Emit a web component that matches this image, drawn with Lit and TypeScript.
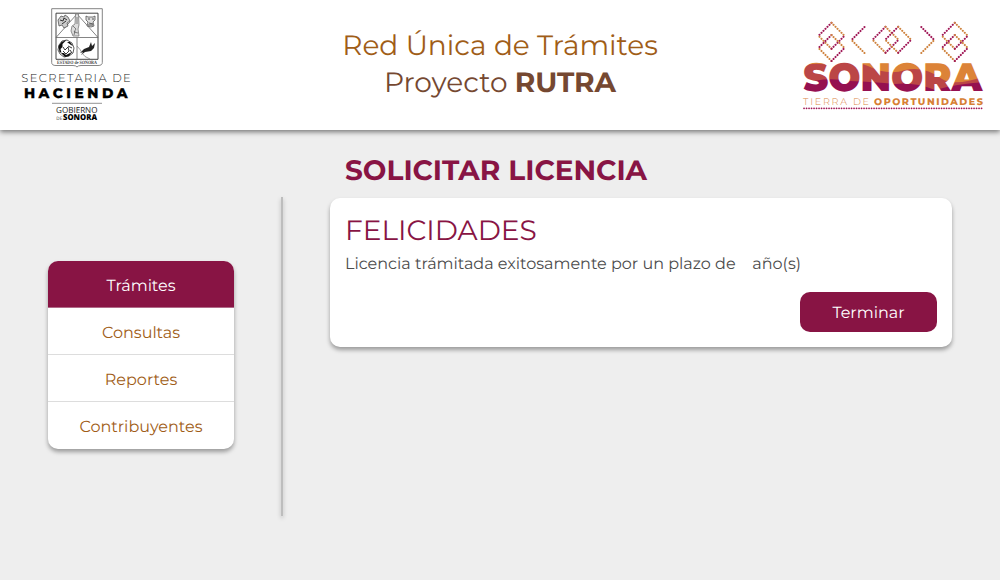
import { LitElement, html, css, svg } from "lit";
import { customElement, property } from "lit/decorators.js";

const MAGENTA = "#a01857";
const ORANGE = "#cf8440";

/** Dotted diamond centred on x, y. */
const diamond = (x: number, y: number) => svg`
  <path d="M${x} ${y - 13}l-13 13" stroke=${MAGENTA} />
  <path d="M${x} ${y - 13}l13 13" stroke=${ORANGE} />
  <path d="M${x} ${y + 13}l-13 -13" stroke=${ORANGE} />
  <path d="M${x} ${y + 13}l13 -13" stroke=${MAGENTA} />`;

@customElement("hacienda-logo")
class HaciendaLogo extends LitElement {
  static styles = css`
    :host { display: block; width: 112px; height: 116px; }
    svg { display: block; overflow: visible; }
    .sans { font-family: Montserrat, Inter, sans-serif; }
    .narrow { font-family: "Open Sans", "Noto Sans", sans-serif; }
    .serif { font-family: "Liberation Serif", serif; }
  `;
  render() {
    return html`<svg width="112" height="116" viewBox="20 6 112 116">
      <path d="M51.7 8.7H102.3V62.5Q102.3 65.5 98 65.5H81Q78 65.5 77 67Q76 65.5 73 65.5H56Q51.7 65.5 51.7 62.5Z" fill="#fff" stroke="#777" stroke-width=".9" />
      <path d="M56 13.2H98V59.3H56Z" fill="none" stroke="#444" stroke-width="1" />
      <path d="M56 37.5H98M77 37.5V59M77 14L56 37.5M77 14L98 37.5" fill="none" stroke="#666" stroke-width=".8" />
      <path d="M58 20l3-4 3 1 1-2 3 2 2 4-3 2 1 3-4 2-2-3-3 1z" fill="#ccc" stroke="#444" stroke-width=".7" />
      <path d="M60 20l3 1 1-3 3 2M62 24l4-3" fill="none" stroke="#222" stroke-width=".9" />
      <path d="M86 16l2 1h5l2-1v4l-2 2 1 4-3 1-4-1 1-4-2-2z" fill="#ddd" stroke="#555" stroke-width=".8" />
      <path d="M88 19h2M92 19h2M89 23l4 1M88 25h5" stroke="#333" stroke-width=".8" />
      <path d="M75.5 14h3l.5 11-1 4 1 7h-6l-2-5 1-5 3-2z" fill="#ddd" stroke="#777" stroke-width=".8" />
      <path d="M73 26l3 3-2 3 4 1M74 35l1-4M77 17v7" fill="none" stroke="#555" stroke-width=".7" />
      <path d="M59 45l3-4 5-1 5 3 2 5-1 5-4 3-5 1-4-3-2-4z" fill="#fff" stroke="#333" stroke-width=".8" />
      <path d="M58.5 46l3-4 5-2-4 4 0 3-2 2 1 4-2-1zM61 53l3 0 2 2 6-3-3 4-4 1zM67 42l3 0 3 4-2-1z" fill="#111" />
      <path d="M63 47l2 3 3-3 1 4-3 3-3-3M68 46l4 2M70 50l2 3" fill="none" stroke="#222" stroke-width=".9" />
      <path d="M80 53l4-4 5-2 2-5 1 4 3-3-1 5-3 3-6 1-4 3 2-3z" fill="#222" />
      <path d="M77 46Q81 50 82 53Q84 57 90 59" fill="none" stroke="#777" stroke-width=".7" />
      <text class="serif" x="57" y="63.9" font-size="5" font-weight="700" fill="#444" textLength="40" lengthAdjust="spacingAndGlyphs">ESTADO de SONORA</text>
      <text class="sans" x="21.3" y="82" font-size="11.5" font-weight="300" fill="#222" textLength="109.5">SECRETARIA DE</text>
      <text class="sans" x="24" y="98" font-size="13.8" font-weight="800" fill="#000" stroke="#000" stroke-width=".25" textLength="103.5">HACIENDA</text>
      <path d="M52 103.3H102" stroke="#777" stroke-width=".8" />
      <text class="narrow" x="56" y="112.8" font-size="8.4" fill="#222" textLength="41.5" lengthAdjust="spacingAndGlyphs">GOBIERNO</text>
      <text class="narrow" x="56.3" y="119.7" font-size="4.5" fill="#333" textLength="6" lengthAdjust="spacingAndGlyphs">DE</text>
      <text class="narrow" x="63" y="119.7" font-size="8.2" font-weight="800" fill="#000" textLength="34" lengthAdjust="spacingAndGlyphs">SONORA</text>
    </svg>`;
  }
}

@customElement("sonora-logo")
class SonoraLogo extends LitElement {
  static styles = css`
    :host { display: block; width: 184px; height: 92px; }
    svg { display: block; overflow: visible; }
    text { font-family: Montserrat, Inter, sans-serif; }
  `;
  render() {
    return html`<svg width="184" height="92" viewBox="801 20 184 92">
      <defs>
        <pattern id="bands" patternUnits="userSpaceOnUse" x="801" y="60" width="184" height="35" viewBox="801 60 184 35">
          <path d="M801 60H985V95H801Z" fill="#dc8338" />
          <path d="M801 66Q815 62 828 65Q850 59 868 66Q888 76 905 70Q925 66 942 79Q955 87 985 76V95H801Z" fill="#bb4646" />
          <path d="M801 85Q823 76 850 81Q875 82 895 84Q915 82 935 90Q955 84 985 82V95H801Z" fill="#951050" />
        </pattern>
      </defs>
      <g fill="none" stroke-width="2.1" stroke-linecap="round" stroke-dasharray="0.1 2.72">
        ${diamond(831.5, 35.8)} ${diamond(831.5, 48)}
        ${diamond(885.5, 39.8)} ${diamond(898.2, 39.8)}
        ${diamond(954.8, 35.8)} ${diamond(954.8, 48)}
        <path d="M864.5 27l-13 13" stroke=${MAGENTA} /><path d="M864.5 53l-13 -13" stroke=${ORANGE} />
        <path d="M921.3 27l13 13" stroke=${MAGENTA} /><path d="M921.3 53l13 -13" stroke=${ORANGE} />
      </g>
      <text x="803.2" y="91.3" font-size="39.5" font-weight="900" fill="url(#bands)" textLength="179" lengthAdjust="spacingAndGlyphs">SONORA</text>
      <text x="803" y="105" font-size="9.6" font-weight="300" fill="#d9843f" textLength="66">TIERRA DE</text>
      <text x="874" y="105" font-size="9.6" font-weight="800" fill="#d77f35" textLength="109">OPORTUNIDADES</text>
      <path d="M804 108.3H983" stroke=${MAGENTA} stroke-width="1.7" stroke-linecap="round" stroke-dasharray="0.1 2.4" />
    </svg>`;
  }
}

@customElement("app-root")
class AppRoot extends LitElement {
  @property({ type: Array }) sections = ["Trámites", "Consultas", "Reportes", "Contribuyentes"];

  static styles = css`
    :host {
      display: flex; flex-direction: column; height: 580px; overflow: hidden;
      background: #eee; color: #4c4c4c; font: 400 16px/24px Montserrat, Inter, sans-serif;
      text-rendering: geometricPrecision;
    }
    * { box-sizing: border-box; }
    header {
      flex: none; display: grid; grid-template-columns: 310px 340px 1fr; justify-items: start; height: 130px; padding: 6px 15px 0 20px;
      background: #fff; box-shadow: 0 2px 5px rgba(0, 0, 0, .5);
    }
    sonora-logo { margin-top: 14px; justify-self: end; }
    .brand { width: 340px; margin-top: 22px; font-size: 28px; line-height: 37px; text-align: center; color: #a05d17; white-space: nowrap; }
    .line { display: block; }
    .name { color: #754831; }
    .name b { font-weight: 700; letter-spacing: -.1px; }
    .body { display: grid; grid-template-columns: 281px 49px 622px; }
    aside { padding: 131px 47px 0 48px; }
    nav { overflow: hidden; border-radius: 10px; background: #fff; box-shadow: 0 3px 4px rgba(0, 0, 0, .35); }
    .item { display: block; height: 47px; padding-top: 2px; line-height: 48px; text-align: center; color: #a05d17; border-bottom: 1px solid #ddd; text-decoration: none; }
    .item:last-child { border-bottom: 0; }
    .active { background: #881444; color: #fff; border-color: #b06a88; }
    .rule { width: 2px; height: 319px; margin-top: 67px; background: #bdbdbd; box-shadow: 0 2px 4px rgba(0, 0, 0, .25); }
    h1 { margin: 23px 15px 9px; font-size: 28px; line-height: 36px; font-weight: 700; color: #881444; white-space: nowrap; }
    .card { height: 149px; padding: 16px 15px 15px; display: flex; flex-direction: column; border-radius: 10px; background: #fff; box-shadow: 0 3px 4px rgba(0, 0, 0, .35); }
    h2 { margin: 0; font-size: 28px; line-height: 34px; font-weight: 400; color: #881444; }
    p { margin: 5px 0 0; white-space: pre; }
    button { align-self: flex-end; margin-top: 15px; width: 137px; height: 40px; padding: 3px 0 0; border: 0; border-radius: 10px; background: #881444; color: #fff; font: inherit; text-rendering: inherit; }
  `;

  render() {
    return html`
      <header>
        <hacienda-logo></hacienda-logo>
        <div class="brand"><span class="line title">Red Única de Trámites</span><span class="line name">Proyecto <b>RUTRA</b></span></div>
        <sonora-logo></sonora-logo>
      </header>
      <div class="body">
        <aside><nav>${this.sections.map((s, i) => html`<a class="item ${i === 0 ? "active" : ""}">${s}</a>`)}</nav></aside>
        <div class="rule"></div>
        <main>
          <h1>SOLICITAR LICENCIA</h1>
          <section class="card">
            <h2>FELICIDADES</h2>
            <p><span>Licencia trámitada exitosamente por un plazo de</span><span class="unit">    año(s)</span></p>
            <button>Terminar</button>
          </section>
        </main>
      </div>`;
  }
}
